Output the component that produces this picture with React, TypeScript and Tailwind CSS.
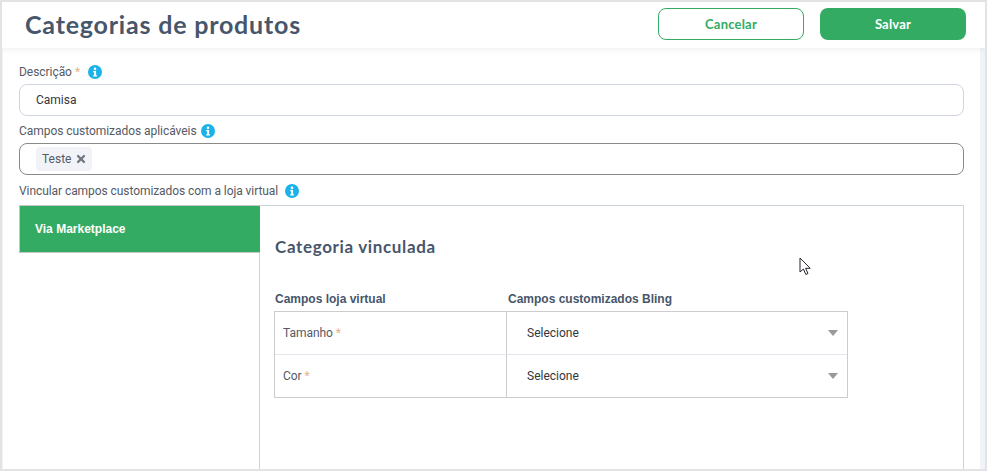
import { X } from 'lucide-react';

const sans = 'font-["Roboto",sans-serif]';
const arial = 'font-["Liberation_Sans",sans-serif]';
const display = 'font-["Lato",sans-serif]';

function Hint() {
  return (
    <span className="flex h-[14px] w-[14px] items-center justify-center rounded-full bg-[#1ab2e8]">
      <svg viewBox="0 0 14 14" className="h-[14px] w-[14px]" fill="#fff">
        <circle cx="7" cy="3.9" r="1.3" />
        <path d="M5.2 6h2.9v4.2h.9v1.2H5.2v-1.2h.9V7.200H5.200z" />
      </svg>
    </span>
  );
}

function Req() {
  return <span className="ml-[3px] text-[#e6b48a]">*</span>;
}

function Caret() {
  return <span className="h-0 w-0 border-x-[5px] border-t-[6px] border-x-transparent border-t-[#999999]" />;
}

function MapRow({ label, last }: { label: string; last?: boolean }) {
  return (
    <div className={last ? 'flex h-[42px]' : 'flex h-[43px] border-b border-[#e4e4ee]'}>
      <div className="flex w-[232px] items-center border-r border-[#cccccc] pl-2 text-xs tracking-[-0.05px] text-[#555a64]">
        {label}
        <Req />
      </div>
      <div className="flex flex-1 items-center justify-between pl-5 pr-[9px] text-xs text-[#33363d]">
        Selecione
        <Caret />
      </div>
    </div>
  );
}

export default function App() {
  return (
    <div className={`relative h-[471px] w-[987px] overflow-hidden border-x-2 border-y-2 border-[#e3e3e3] bg-white ${sans}`}>
      <header className="relative z-10 flex h-[46px] items-start justify-between bg-white pl-[23px] pr-[19px] shadow-[0_2px_6px_rgba(0,0,0,0.06)]">
        <h1 className={`mt-[5px] text-[25px] font-bold leading-[34px] tracking-[0.8px] text-[#47566b] ${display}`}>
          Categorias de produtos
        </h1>
        <div className="mt-[6px] flex gap-4">
          <button type="button" className={`h-8 w-[146px] rounded-lg border border-[#33ab62] bg-white pt-[1px] text-[13px] font-bold tracking-[0.2px] text-[#33ab62] ${display}`}>
            Cancelar
          </button>
          <button type="button" className={`h-8 w-[146px] rounded-lg bg-[#33ab62] pt-[1px] text-[13px] font-bold tracking-[0.2px] text-white ${display}`}>
            Salvar
          </button>
        </div>
      </header>

      <div className="flex h-[421px]">
        <main className="flex w-[978px] flex-col border-l border-[#f0f3f8] pl-[16px] pr-[16px]">
          <div className="mt-[16px] flex h-[16px] items-center text-xs tracking-[-0.05px] text-[#555a64]">
            Descrição
            <Req />
            <span className="ml-[8px]">
              <Hint />
            </span>
          </div>
          <div className="mt-[4px] flex h-8 items-center rounded-lg border border-[#d0d5e2] pl-[16px] text-xs text-[#33363d]">
            Camisa
          </div>
          <div className="mt-[7px] flex h-[16px] items-center gap-[4px] text-xs tracking-[-0.05px] text-[#555a64]">
            Campos customizados aplicáveis
            <Hint />
          </div>
          <div className="mt-[4px] flex h-8 items-center rounded-lg border border-[#8a8a8a] pl-[16px]">
            <span className="flex h-[24px] w-[56px] items-center gap-[4px] rounded bg-[#f1f3f8] pl-[6px] text-xs text-[#555a64]">
              Teste
              <X size={12} strokeWidth={4.5} className="text-[#6f7480]" />
            </span>
          </div>
          <div className="mt-[8px] flex h-[16px] items-center gap-[7px] text-xs tracking-[-0.07px] text-[#555a64]">
            Vincular campos customizados com a loja virtual
            <Hint />
          </div>
          <section className="mt-[6px] flex flex-1">
            <aside className="w-[240px]">
              <div className={`relative z-10 flex h-[48px] w-[241px] items-center border border-r-0 border-[#c4c8c4] bg-[#33ab62] pl-[15px] text-xs font-bold text-white ${arial}`}>
                Via Marketplace
              </div>
            </aside>
            <div className="flex-1 border-x border-t border-[#cdd3da] pl-[15px]">
              <h2 className={`mt-[31px] text-[17px] font-bold leading-5 tracking-[0.65px] text-[#47566b] ${display}`}>
                Categoria vinculada
              </h2>
              <div className={`mt-[34px] flex h-[16px] items-center text-xs font-bold text-[#47566b] ${arial}`}>
                <span className="w-[233px]">Campos loja virtual</span>
                <span>Campos customizados Bling</span>
              </div>
              <div className="ml-[-1px] mt-[4px] w-[574px] border border-[#cccccc]">
                <MapRow label="Tamanho" />
                <MapRow label="Cor" last />
              </div>
            </div>
          </section>
        </main>
        <div className="w-[5px] bg-[#f0f3f8]" />
      </div>

      <svg viewBox="0 0 13 20" className="absolute left-[797px] top-[255px] h-[20px] w-[13px]" fill="#fff" stroke="#23252b" strokeWidth="1">
        <path d="M1 1v14l3.400-3 2.400 5.500 2.200-1-2.400-5.200h4.600z" />
      </svg>
    </div>
  );
}
